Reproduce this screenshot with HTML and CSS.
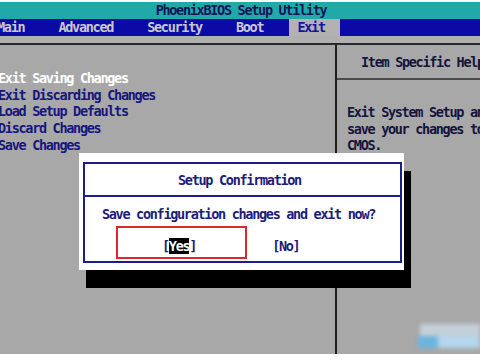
FILE: index.html
```html
<!DOCTYPE html>
<html lang="en">
<head>
	<meta charset="UTF-8">
	<title>PhoenixBIOS Setup Utility</title>
	<link rel="stylesheet" href="styles.css">
</head>
<body>
	<div class="screen">
		<div class="bios-title">PhoenixBIOS Setup Utility</div>
		<div class="bios-menu">Main     Advanced     Security     Boot     <span class="menu-on">Exit</span></div>
		<div class="bios-band"></div>
		<div class="bios-main">
			<div class="item-list">
				<div class="item item-on">Exit Saving Changes</div>
				<div class="item">Exit Discarding Changes</div>
				<div class="item">Load Setup Defaults</div>
				<div class="item">Discard Changes</div>
				<div class="item">Save Changes</div>
			</div>
			<div class="help">
				<div class="help-title">Item Specific Help</div>
				<div class="help-text">
					<div>Exit System Setup and</div>
					<div>save your changes to</div>
					<div>CMOS.</div>
				</div>
			</div>
		</div>
	</div>

	<!-- 确认对话框 -->
	<div class="dialog">
		<div class="dialog-inner">
			<div class="dialog-title">Setup Confirmation</div>
			<div class="dialog-msg">Save configuration changes and exit now?</div>
			<div class="dialog-btns">
				<span class="btn">[<span class="btn-on">Yes</span>]</span>
				<span class="btn">[No]</span>
			</div>
		</div>
	</div>
	<!-- 红框标注 -->
	<div class="mark"></div>
	<!-- 水印 -->
	<div class="wm">
		<div class="wm-a"></div>
		<div class="wm-b"></div>
		<div class="wm-c"></div>
	</div>
</body>
</html>
```

FILE: styles.css
```css
html {
    background: #ffffff;
}
body {
    margin: 0px;
    width: 480px;
    height: 360px;
    overflow: hidden;
    position: relative;
    font-family: "DejaVu Sans Mono", "Liberation Mono", monospace;
    font-size: 13.5px;
    font-weight: bold;
    letter-spacing: -1.3px;
}
.screen {
    margin-top: 2px;
    height: 352px;
    background: #a8a8a8;
    display: flex;
    flex-direction: column;
    overflow: hidden;
}
.bios-title {
    height: 17px;
    line-height: 17px;
    background: #1faaa9;
    color: #14145a;
    text-align: center;
    padding-left: 2px;
}
.bios-menu {
    height: 17px;
    line-height: 17px;
    background: #0a0aa6;
    color: #c8c8d0;
    white-space: pre;
    margin-left: -3px;
}
.menu-on {
    display: inline-block;
    background: #b2b2b2;
    color: #1414a0;
    margin-left: -8px;
    padding: 0px 15px 0px 8px;
}
.bios-band {
    height: 7px;
    background: #b0b0b0;
    border-bottom: 2px solid #2a2a2a;
}
.bios-main {
    flex: 1;
    display: flex;
}
.item-list {
    width: 337px;
    border-right: 2px solid #1e1e1e;
    padding-top: 25px;
    margin-left: -2px;
}
.item {
    height: 16.7px;
    line-height: 16.7px;
    color: #16167e;
    white-space: pre;
}
.item-on {
    color: #ffffff;
}
.help {
    flex: 1;
    white-space: nowrap;
    overflow: hidden;
}
.help-title {
    height: 33px;
    line-height: 34px;
    border-bottom: 2px solid #4a4a4a;
    color: #14143c;
    padding-left: 24px;
}
.help-text {
    padding: 24px 0px 0px 10px;
    color: #14143c;
}
.help-text div {
    height: 16.6px;
    line-height: 16.6px;
}
.dialog {
    position: absolute;
    left: 79px;
    top: 153px;
    width: 325px;
    height: 117px;
    background: #ffffff;
    box-shadow: 7px 18px 0px #000000;
    display: flex;
}
.dialog-inner {
    flex: 1;
    margin: 9px 2px 7px 4px;
    border: 2px solid #1c1c8c;
    color: #1c1c7a;
}
.dialog-title {
    height: 31px;
    line-height: 32px;
    border-bottom: 2px solid #1c1c8c;
    text-align: center;
    padding-right: 6px;
}
.dialog-msg {
    height: 34px;
    line-height: 34px;
    text-align: center;
    padding-right: 8px;
}
.dialog-btns {
    display: flex;
    padding-left: 77px;
    gap: 76px;
    line-height: 30px;
}
.btn-on {
    background: #000000;
    color: #ffffff;
}
.mark {
    position: absolute;
    left: 116px;
    top: 226px;
    width: 127px;
    height: 29px;
    border: 2px solid #e0282c;
}
.wm {
    position: absolute;
    left: 414px;
    top: 322px;
    width: 66px;
    height: 36px;
    filter: blur(2px);
}
.wm-a {
    position: absolute;
    left: 6px;
    top: 2px;
    width: 60px;
    height: 12px;
    background: #c4d0d8;
}
.wm-b {
    position: absolute;
    left: 4px;
    top: 14px;
    width: 20px;
    height: 12px;
    background: #6cb4e0;
}
.wm-c {
    position: absolute;
    left: 24px;
    top: 14px;
    width: 42px;
    height: 12px;
    background: #b4d6ee;
}
```
